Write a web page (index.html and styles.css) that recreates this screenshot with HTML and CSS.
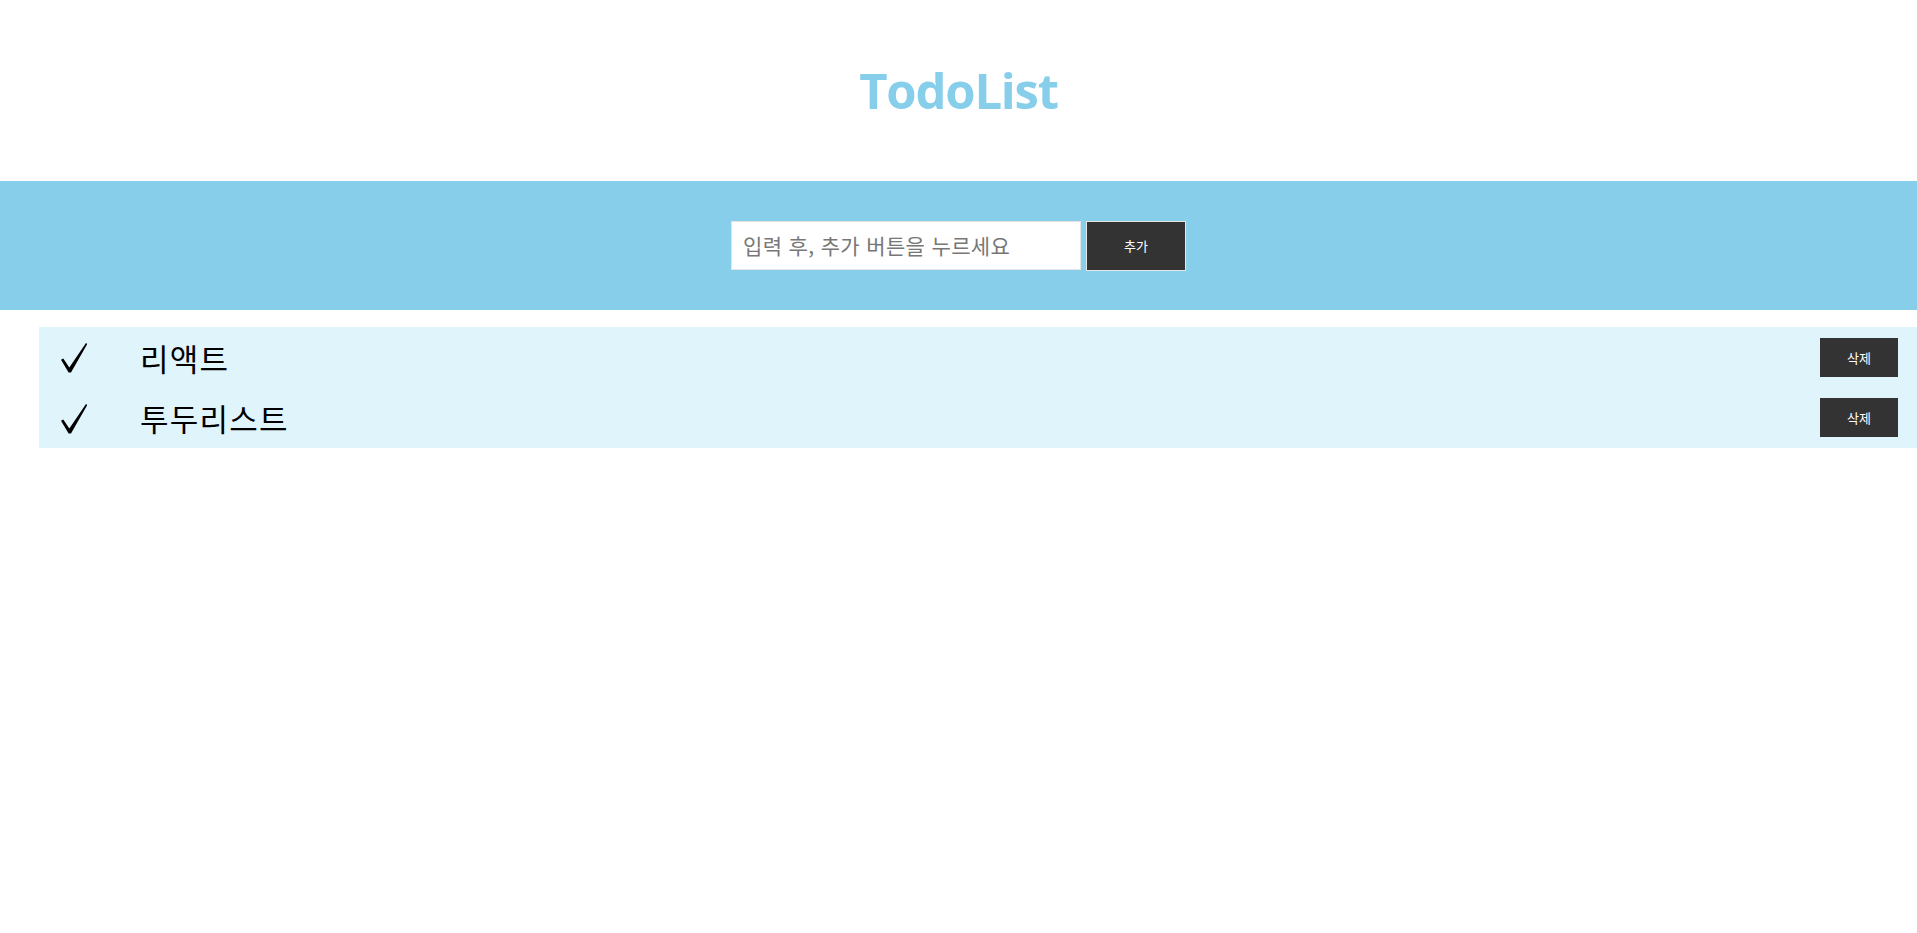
FILE: index.html
```html
<!DOCTYPE html>
<html lang="ko">
<head>
<meta charset="utf-8">
<title>TodoList</title>
<link rel="stylesheet" href="styles.css">
</head>
<body>
<header class="header">
  <h1 class="title">TodoList</h1>
</header>
<section class="form-band">
  <form class="todo-form">
    <input class="todo-input" type="text" placeholder="입력 후, 추가 버튼을 누르세요">
    <button class="add-btn" type="button">추가</button>
  </form>
</section>
<ul class="todo-list">
  <li class="todo-item">
    <svg class="check" viewBox="0 0 26 30" width="26" height="30"><path d="M0 16.8 L2.3 15.5 L8.3 24.4 L25 0 L26.3 0.9 L10 29.6 L7.6 29.6 Z" fill="#000"/></svg>
    <span class="todo-text">리액트</span>
    <button class="del-btn" type="button">삭제</button>
  </li>
  <li class="todo-item">
    <svg class="check" viewBox="0 0 26 30" width="26" height="30"><path d="M0 16.8 L2.3 15.5 L8.3 24.4 L25 0 L26.3 0.9 L10 29.6 L7.6 29.6 Z" fill="#000"/></svg>
    <span class="todo-text">투두리스트</span>
    <button class="del-btn" type="button">삭제</button>
  </li>
</ul>
</body>
</html>
```
FILE: styles.css
```css
* { box-sizing: border-box; }
html, body { margin: 0; padding: 0; background: #fff; }
body { font-family: "Noto Sans CJK KR", "Noto Sans", sans-serif; }

.header {
  height: 181px;
  display: flex;
  align-items: center;
  justify-content: center;
}
.title {
  margin: 0;
  font-family: "Open Sans", "Noto Sans", sans-serif;
  font-weight: 700;
  font-size: 49px;
  letter-spacing: -1.2px;
  color: #87ceeb;
  line-height: 1;
}

.form-band {
  background: #87ceeb;
  height: 129px;
  display: flex;
  align-items: center;
  justify-content: center;
}
.todo-form {
  display: flex;
  gap: 5px;
  margin: 0;
}
.todo-input {
  width: 350px;
  height: 49px;
  border: 1px solid #e4e4e4;
  background: #fff;
  padding: 0 11px;
  font-family: "Noto Sans CJK KR", sans-serif;
  font-size: 21px;
  letter-spacing: 0.35px;
  color: #333;
  outline: none;
}
.todo-input::placeholder { color: #777; }
.add-btn {
  width: 100px;
  height: 50px;
  background: #333;
  border: 1px solid #e6e6e6;
  color: #fff;
  font-family: "Noto Sans CJK KR", sans-serif;
  font-size: 13px;
  padding: 0;
}

.todo-list {
  list-style: none;
  margin: 17px 0 0 39px;
  padding: 0;
  background: #e0f4fc;
}
.todo-item {
  height: 60.5px;
  display: flex;
  align-items: center;
  padding-left: 22px;
}
.check { display: block; flex: none; margin-top: 2px; }
.todo-text {
  margin-left: 53px;
  font-size: 31px;
  letter-spacing: 1.2px;
  color: #000;
  line-height: 1;
}
.del-btn {
  margin-left: auto;
  margin-right: 19px;
  width: 78px;
  height: 39px;
  background: #333;
  border: none;
  color: #fff;
  font-family: "Noto Sans CJK KR", sans-serif;
  font-size: 13px;
  padding: 0;
}
```
